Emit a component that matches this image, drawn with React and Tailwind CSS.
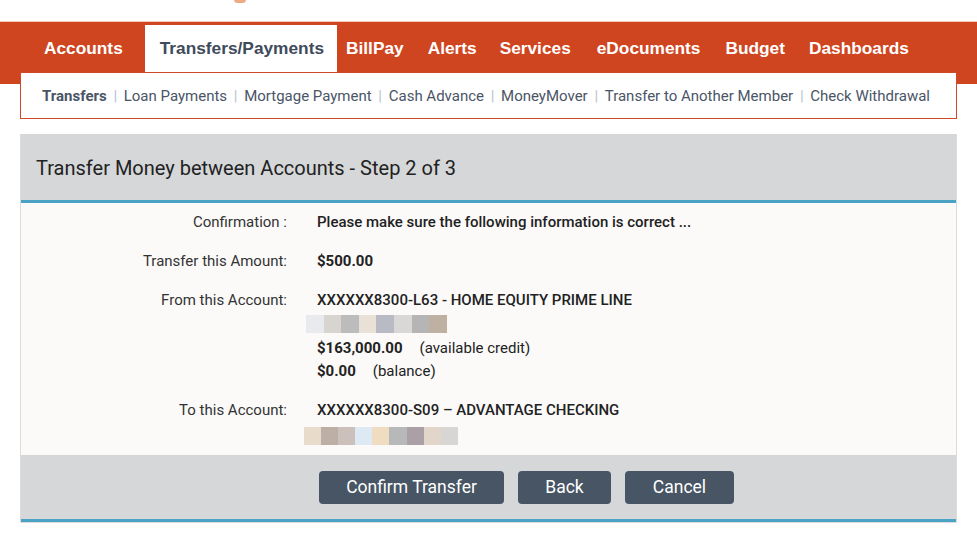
import React from "react";

const tabs = [
  ["Accounts", "pl-[12px] pr-[12px] text-white"],
  ["Transfers/Payments", "ml-[10px] pl-[15px] pr-[13px] bg-white text-[#3e4b5b]"],
  ["BillPay", "pl-[9px] pr-[12px] text-white"],
  ["Alerts", "pl-[12px] pr-[11px] text-white"],
  ["Services", "pl-[12px] pr-[14px] text-white"],
  ["eDocuments", "pl-[12px] pr-[13px] text-white"],
  ["Budget", "px-[12px] text-white"],
  ["Dashboards", "px-[12px] text-white"],
];
const subs = ["Transfers", "Loan Payments", "Mortgage Payment", "Cash Advance", "MoneyMover", "Transfer to Another Member", "Check Withdrawal"];
const fromBlocks = ["#e8eaed", "#d8d5d1", "#bbbcbb", "#e9e1d6", "#b8bbc3", "#dad8d6", "#b5b5b6", "#beb0a3"];
const toBlocks = ["#e9dbc9", "#bdafa6", "#cbc0bb", "#deeaf3", "#f0dcc0", "#b7b9b9", "#aba0a6", "#e2d6cb", "#d8d6d4"];

function Row({ label, children, className = "" }) {
  return (
    <div className={"flex " + className}>
      <div className="w-[266px] shrink-0 text-right text-[15px] text-[#333] leading-[20px]">{label}</div>
      <div className="ml-[30px] text-[15px] text-[#222] leading-[20px]">{children}</div>
    </div>
  );
}

export default function App() {
  return (
    <div className="w-[977px] h-[542px] bg-white overflow-hidden font-['Roboto',sans-serif]">
      <div className="h-[21px] relative">
        <div className="absolute left-[234px] top-[-4px] w-[12px] h-[7px] rounded-full bg-[#f0a888]" />
      </div>
      <div className="h-[1px] bg-[#f1c9bd]" />
      <div className="h-[62px] bg-[#cf4520] pt-[3px]">
        <div className="flex h-[47px] pl-[32px] font-['Liberation_Sans',Arial,sans-serif] font-bold text-[17.3px]">
          {tabs.map(([t, cls]) => (
            <div key={t} className={"flex items-center " + cls}>
              {t}
            </div>
          ))}
        </div>
      </div>
      <div className="mx-[20px] -mt-[12px] h-[47px] bg-white border border-[#d24726] relative flex items-center pl-[21px] pt-[2px] text-[15px] text-[#4a5566]">
        {subs.map((s, i) => (
          <React.Fragment key={s}>
            {i > 0 && <span className="mx-[6.7px] text-[#b6c2cf]">|</span>}
            <span className={i === 0 ? "font-bold text-[#4a5566]" : ""}>{s}</span>
          </React.Fragment>
        ))}
      </div>
      <div className="mx-[20px] mt-[15px] border-l border-r border-b border-[#dcdcdc]">
        <div className="h-[66px] bg-[#d6d7d9] flex items-center pl-[15px] pt-[2px] text-[20px] text-[#222]">
          Transfer Money between Accounts - Step 2 of 3
        </div>
        <div className="h-[3px] bg-[#4aa3c4]" />
        <div className="bg-[#fbfaf9] h-[252px] pt-[9px] flex flex-col">
          <Row label="Confirmation :">
            <span className="font-medium">Please make sure the following information is correct ...</span>
          </Row>
          <Row label="Transfer this Amount:" className="mt-[19px]">
            <span className="font-bold">$500.00</span>
          </Row>
          <Row label="From this Account:" className="mt-[19px]">
            <div className="font-medium">XXXXXX8300-L63 - HOME EQUITY PRIME LINE</div>
            <div className="flex mt-[5px] -ml-[11px] h-[18px]">
              {fromBlocks.map((c, i) => (
                <div key={i} className="w-[17.6px] h-[18px]" style={{ background: c }} />
              ))}
            </div>
            <div className="mt-[5px]">
              <span className="font-bold">$163,000.00</span>
              <span className="ml-[17px]">(available credit)</span>
            </div>
            <div className="mt-[3px]">
              <span className="font-bold">$0.00</span>
              <span className="ml-[17px]">(balance)</span>
            </div>
          </Row>
          <Row label="To this Account:" className="mt-[19px]">
            <div className="font-medium">XXXXXX8300-S09 – ADVANTAGE CHECKING</div>
            <div className="flex mt-[7px] -ml-[13px] h-[18px]">
              {toBlocks.map((c, i) => (
                <div key={i} className="w-[17.1px] h-[18px]" style={{ background: c }} />
              ))}
            </div>
          </Row>
        </div>
        <div className="h-[64px] bg-[#d6d7d9] flex items-center pl-[298px] pt-[1px] gap-[14px]">
          <button className="w-[185px] h-[33px] rounded-[4px] bg-[#475565] text-white text-[17.5px]">Confirm Transfer</button>
          <button className="w-[93px] h-[33px] rounded-[4px] bg-[#475565] text-white text-[17.5px]">Back</button>
          <button className="w-[109px] h-[33px] rounded-[4px] bg-[#475565] text-white text-[17.5px]">Cancel</button>
        </div>
        <div className="h-[3px] bg-[#4aa3c4]" />
      </div>
    </div>
  );
}
